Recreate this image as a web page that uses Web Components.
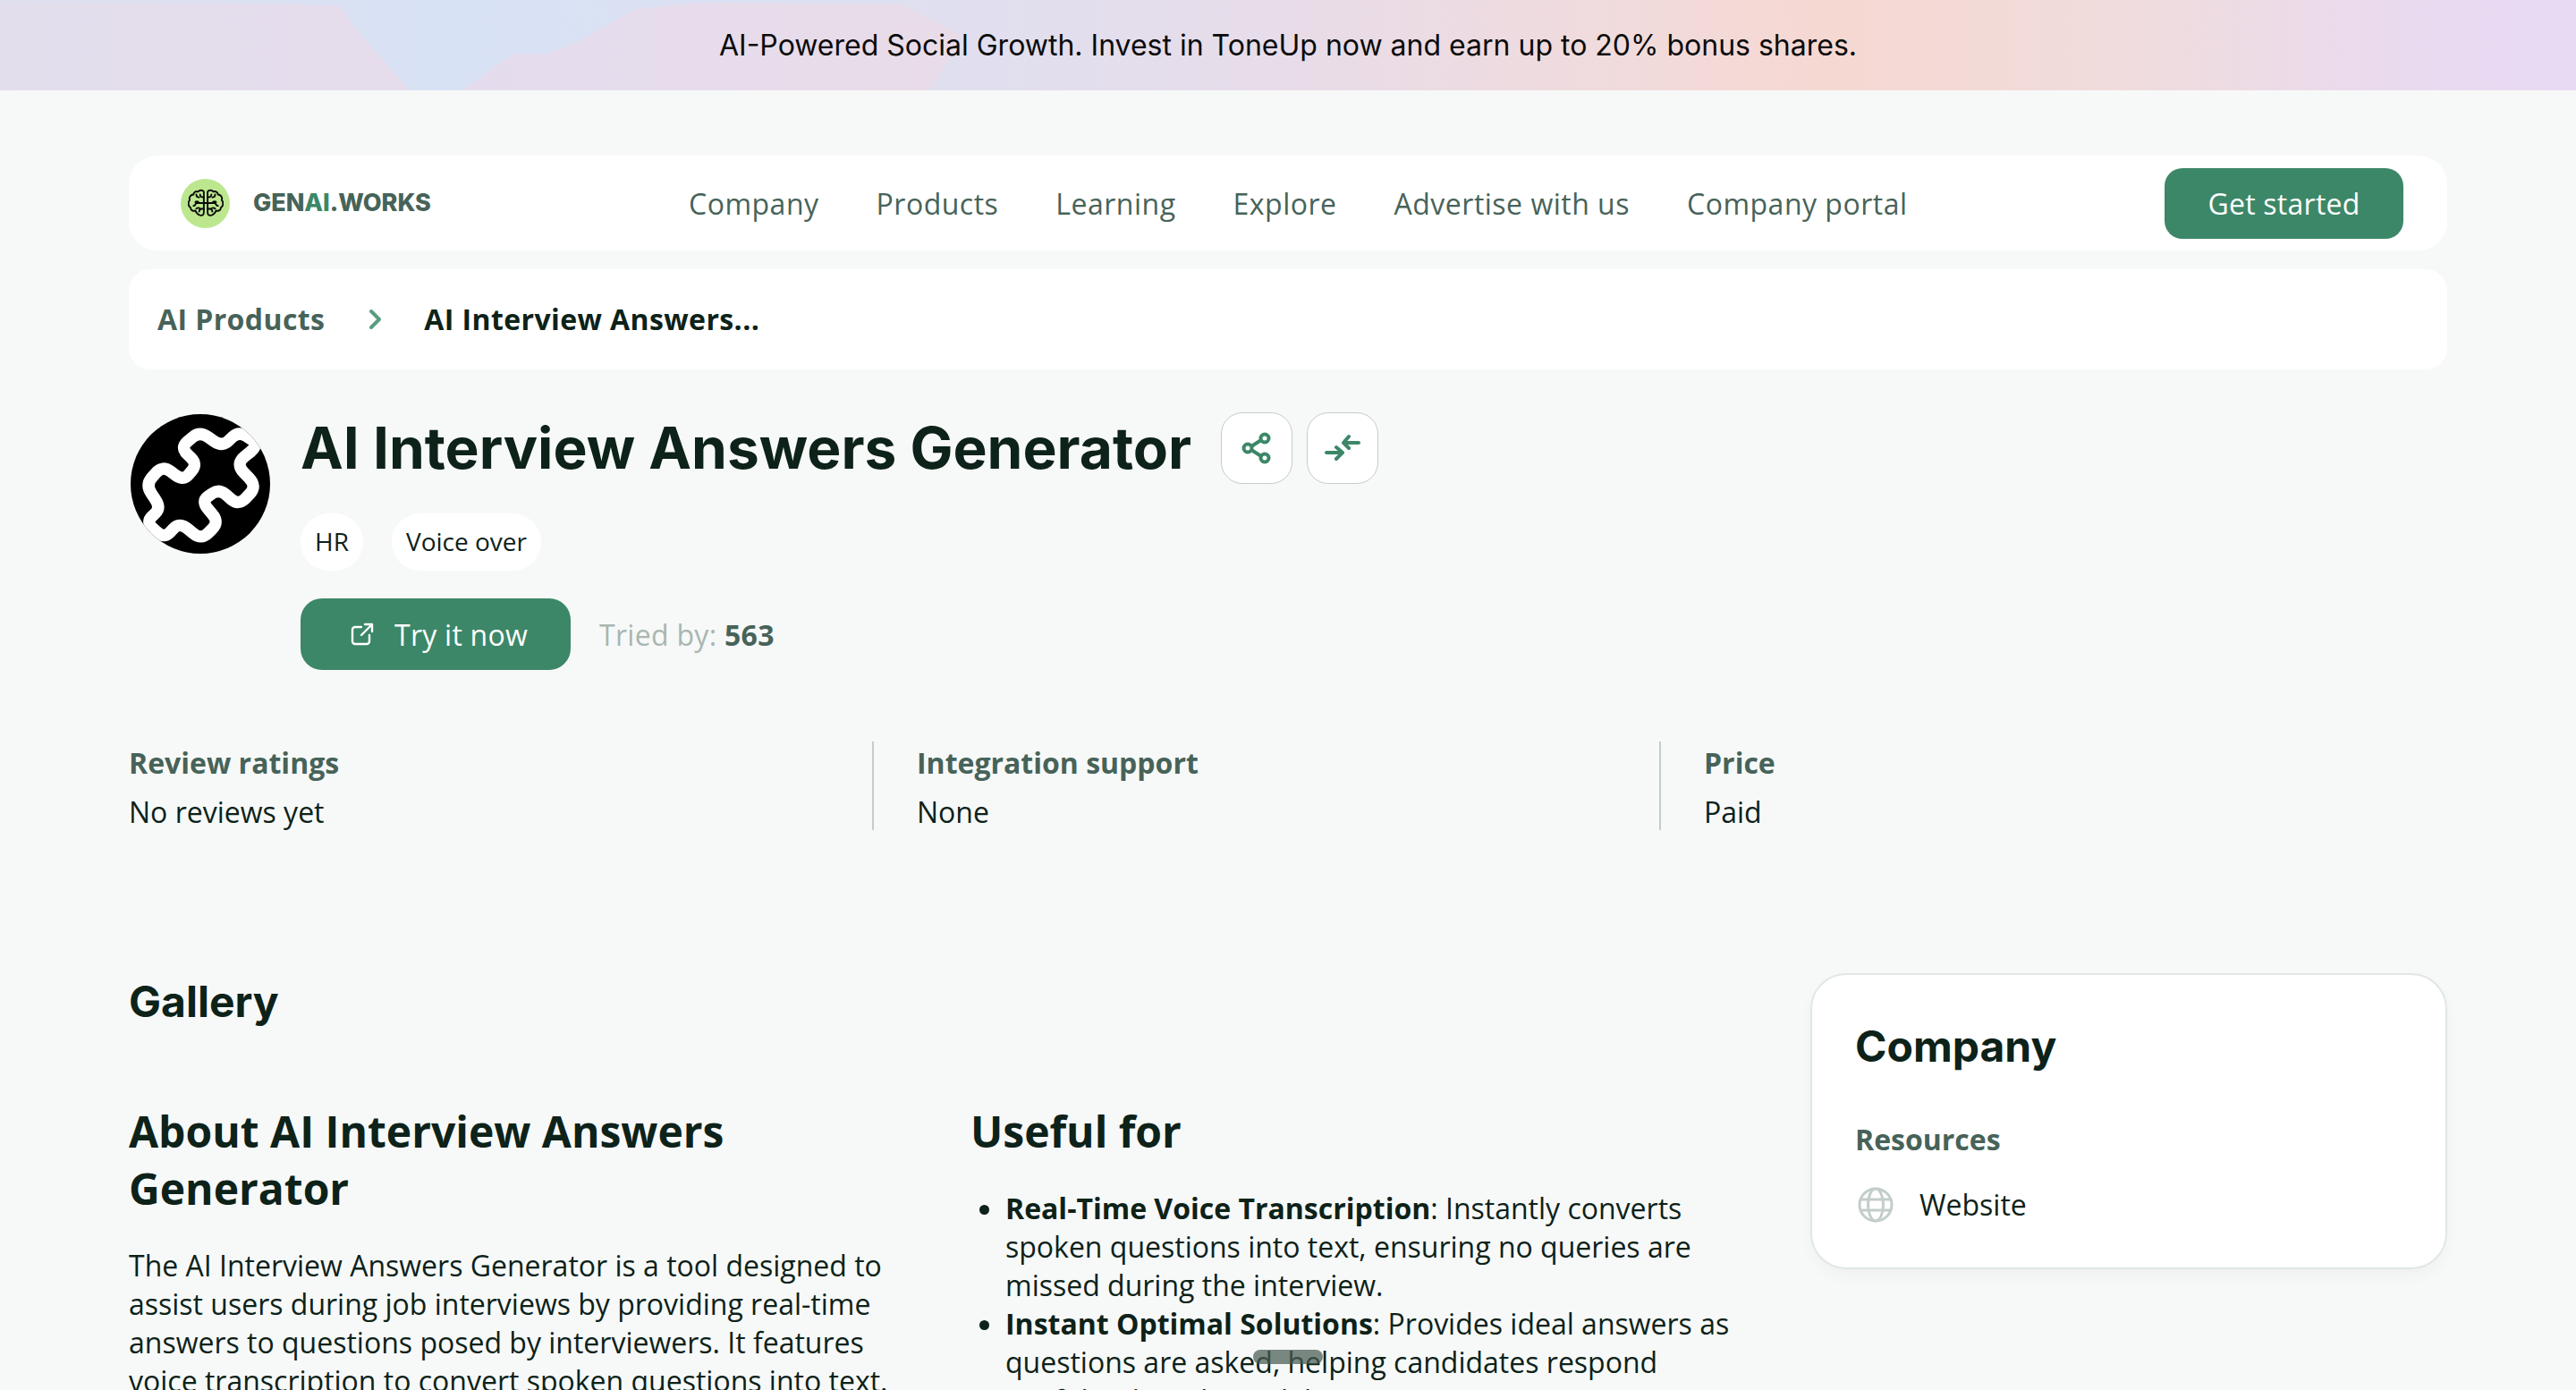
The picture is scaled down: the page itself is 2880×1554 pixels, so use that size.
<!DOCTYPE html>
<html>
<head>
<meta charset="utf-8">
<title>AI Interview Answers Generator</title>
<style>
    html, body { margin: 0; padding: 0; height: 1554px; overflow: hidden; background: #f7f9f8; }
    body { font-family: "Open Sans", sans-serif; color: #0d2219; }
    .wrap { display: block; padding: 0 144px; }
</style>
</head>
<body>
<promo-banner>AI-Powered Social Growth. Invest in ToneUp now and earn up to 20% bonus shares.</promo-banner>
<div class="wrap">
    <site-nav></site-nav>
    <bread-crumb></bread-crumb>
    <product-head></product-head>
    <product-stats></product-stats>
    <product-body></product-body>
</div>
<script>
class PromoBanner extends HTMLElement {
    connectedCallback() {
        this.attachShadow({ mode: 'open' });
        this.shadowRoot.innerHTML = `
            <style>
                :host {
                    display: flex;
                    align-items: center;
                    justify-content: center;
                    position: relative;
                    height: 101px;
                    overflow: hidden;
                    background: linear-gradient(90deg, #dfe0ee 0%, #d8e2f5 17%, #dce1f3 30%, #e8dce9 50%, #f0dbdd 62%, #f6d8d2 71%, #f0dcdc 82%, #e9daf2 95%, #e8daf3 100%);
                    font: 400 32px/40px Inter, sans-serif;
                    color: #0b0b0b;
                }
                svg { position: absolute; left: 0; top: 0; }
                span { position: relative; }
            </style>
            <svg width="1500" height="101" viewBox="0 0 1500 101">
                <defs>
                    <linearGradient id="a" x1="0" x2="1" y1="0" y2="0"><stop offset="0" stop-color="#e2deec"/><stop offset="1" stop-color="#e6dcec"/></linearGradient>
                    <linearGradient id="b" x1="0" x2="1" y1="0" y2="0"><stop offset="0" stop-color="#e4dcee"/><stop offset="1" stop-color="#e9dce8"/></linearGradient>
                </defs>
                <path d="M0 4 H260 L375 6 Q385 8 392 25 L458 101 H0Z" fill="url(#a)"/>
                <path d="M516 101 L575 60 H610 L650 45 L710 10 L780 3 L1010 5 L1075 40 L1040 101Z" fill="url(#b)"/>
            </svg>
            <span><slot></slot></span>
        `;
    }
}
customElements.define('promo-banner', PromoBanner);

class SiteNav extends HTMLElement {
    connectedCallback() {
        this.attachShadow({ mode: 'open' });
        const links = ['Company', 'Products', 'Learning', 'Explore', 'Advertise with us', 'Company portal'];
        const lobe = `
            <path d="M17 3c-1-2-5-2-6 0-3-1-5 1-5 3-3 0-5 3-4 6-2 2-2 6 1 8 0 3 3 4 5 3 1 3 4 6 7 5 2 0 2-2 2-4z"/>
            <path d="M17 15H9M12 15c-1-2-3-2-4-1M17 9c-2 0-4-1-4-3M9 6c0 2 1 3 3 3M17 21c-2 0-5 0-5 3M9 15c-1 2-2 3-3 3M13 21c-1-1-3-1-4 0"/>`;
        this.shadowRoot.innerHTML = `
            <style>
                :host {
                    display: flex;
                    align-items: center;
                    height: 106px;
                    margin-top: 73px;
                    padding: 0 49px 0 58px;
                    background: #fff;
                    border-radius: 32px;
                    font-family: "Open Sans", sans-serif;
                }
                .logo { display: flex; align-items: center; gap: 26px; width: 568px; }
                .mark {
                    width: 55px;
                    height: 55px;
                    border-radius: 50%;
                    background: #bce78f;
                    display: flex;
                    align-items: center;
                    justify-content: center;
                }
                .name { font: 800 27px/32px Inter, sans-serif; color: #476359; letter-spacing: -0.05px; }
                .name b { color: #3c8768; font-weight: 800; }
                nav { display: flex; gap: 64px; flex: 1; padding-top: 1px; }
                nav a { font-size: 32px; line-height: 44px; color: #476359; letter-spacing: 0.5px; }
                .cta {
                    display: flex;
                    align-items: center;
                    justify-content: center;
                    width: 267px;
                    height: 79px;
                    border-radius: 20px;
                    background: #3c8768;
                    color: #fff;
                    font-size: 32px;
                    letter-spacing: 0.25px;
                }
            </style>
            <div class="logo">
                <div class="mark">
                    <svg width="40" height="33" viewBox="0 0 38 31" fill="none" stroke="#0b0b0b" stroke-width="1.8" stroke-linejoin="round" stroke-linecap="round">
                        <g>${lobe}</g>
                        <g transform="matrix(-1 0 0 1 38 0)">${lobe}</g>
                        <path d="M17 15h4"/>
                    </svg>
                </div>
                <div class="name">GEN<b>AI</b>.WORKS</div>
            </div>
            <nav>${links.map(l => `<a>${l}</a>`).join('')}</nav>
            <div class="cta">Get started</div>
        `;
    }
}
customElements.define('site-nav', SiteNav);

class BreadCrumb extends HTMLElement {
    connectedCallback() {
        this.attachShadow({ mode: 'open' });
        this.shadowRoot.innerHTML = `
            <style>
                :host {
                    display: flex;
                    align-items: center;
                    height: 112px;
                    margin-top: 21px;
                    padding: 0 32px;
                    background: #fff;
                    border-radius: 24px;
                    font: 700 32px/44px "Open Sans", sans-serif;
                    letter-spacing: 0.4px;
                }
                .parent { color: #476359; }
                svg { margin: 0 46px 0 49px; }
                .current { color: #0d2219; }
            </style>
            <span class="parent">AI Products</span>
            <svg width="16" height="24" viewBox="0 0 16 24" fill="none" stroke="#5a9c80" stroke-width="4" stroke-linecap="round" stroke-linejoin="round"><path d="M3 3l9 9-9 9"/></svg>
            <span class="current">AI Interview Answers...</span>
        `;
    }
}
customElements.define('bread-crumb', BreadCrumb);

// rounds the corners of the outline so it reads as one soft band
function softPath(pts, r) {
    let d = '';
    pts.forEach((p, i) => {
        const a = pts[(i + pts.length - 1) % pts.length];
        const b = pts[(i + 1) % pts.length];
        const from = [p[0] + (a[0] - p[0]) * r, p[1] + (a[1] - p[1]) * r];
        const to = [p[0] + (b[0] - p[0]) * r, p[1] + (b[1] - p[1]) * r];
        d += `${i ? 'L' : 'M'}${from[0]} ${from[1]}Q${p[0]} ${p[1]} ${to[0]} ${to[1]}`;
    });
    return d + 'Z';
}

class ProductHead extends HTMLElement {
    connectedCallback() {
        this.attachShadow({ mode: 'open' });
        const band = softPath([
            [480, 170], [400, 235], [472, 310], [410, 375], [345, 318], [285, 360], [345, 430],
            [285, 490], [213, 430], [160, 485], [100, 430], [150, 382], [98, 305], [155, 240],
            [225, 292], [272, 235], [215, 180], [280, 125], [355, 178], [410, 125]
        ], 0.38);
        this.shadowRoot.innerHTML = `
            <style>
                :host {
                    display: grid;
                    grid-template-columns: 160px 1fr;
                    column-gap: 32px;
                    margin-top: 48px;
                    font-family: "Open Sans", sans-serif;
                }
                .avatar { display: block; width: 160px; height: 160px; }
                .title { display: flex; align-items: center; gap: 16px; height: 80px; }
                h1 { margin: 0 17px 0 0; font: 700 64px/80px Inter, sans-serif; color: #0d2219; }
                .icon-btn {
                    display: flex;
                    align-items: center;
                    justify-content: center;
                    width: 78px;
                    height: 78px;
                    background: #fff;
                    border: 1px solid #c3cdc9;
                    border-radius: 24px;
                }
                .tags { display: flex; gap: 32px; margin-top: 33px; }
                .tag {
                    height: 64px;
                    padding: 0 16px;
                    border-radius: 32px;
                    background: #fff;
                    font-size: 28px;
                    line-height: 62px;
                    color: #0d2219;
                }
                .actions { display: flex; align-items: center; gap: 32px; margin-top: 31px; }
                .try {
                    display: flex;
                    align-items: center;
                    gap: 23px;
                    box-sizing: border-box;
                    width: 302px;
                    height: 80px;
                    padding-left: 56px;
                    border-radius: 24px;
                    background: #3c8768;
                    color: #fff;
                    font-size: 32px;
                    letter-spacing: 0.25px;
                }
                .tried { font-size: 32px; color: #a9b6b1; letter-spacing: 0.3px; }
                .tried b { color: #476359; font-weight: 700; }
            </style>
            <svg class="avatar" viewBox="42 62 480 480">
                <defs><clipPath id="disc"><circle cx="282" cy="302" r="234"/></clipPath></defs>
                <circle cx="282" cy="302" r="234" fill="#000"/>
                <path d="${band}" fill="none" stroke="#fff" stroke-width="40" stroke-linejoin="round" clip-path="url(#disc)"/>
            </svg>
            <div>
                <div class="title">
                    <h1>AI Interview Answers Generator</h1>
                    <div class="icon-btn">
                        <svg width="36" height="38" viewBox="0 0 36 38" fill="none" stroke="#3c8768" stroke-width="4"><circle cx="27" cy="8" r="4.5"/><circle cx="8" cy="19" r="4.5"/><circle cx="27" cy="30" r="4.5"/><path d="M12 17l11-7M12 21l11 7"/></svg>
                    </div>
                    <div class="icon-btn">
                        <svg width="40" height="32" viewBox="0 0 40 32" fill="none" stroke="#3c8768" stroke-width="4" stroke-linecap="round" stroke-linejoin="round"><path d="M38 10H22M27 3l-6 7 6 6M2 21h17M13 15l7 6-7 7"/></svg>
                    </div>
                </div>
                <div class="tags"><div class="tag">HR</div><div class="tag">Voice over</div></div>
                <div class="actions">
                    <div class="try">
                        <svg width="26" height="26" viewBox="0 0 26 26" fill="none" stroke="#fff" stroke-width="2.4" stroke-linecap="round" stroke-linejoin="round"><path d="M12 5H5a3 3 0 0 0-3 3v13a3 3 0 0 0 3 3h13a3 3 0 0 0 3-3v-7M12 14L24 2M16 2h8v8"/></svg>
                        <span>Try it now</span>
                    </div>
                    <div class="tried">Tried by: <b>563</b></div>
                </div>
            </div>
        `;
    }
}
customElements.define('product-head', ProductHead);

class ProductStats extends HTMLElement {
    connectedCallback() {
        this.attachShadow({ mode: 'open' });
        const stats = [['Review ratings', 'No reviews yet'], ['Integration support', 'None'], ['Price', 'Paid']];
        this.shadowRoot.innerHTML = `
            <style>
                :host {
                    display: grid;
                    grid-template-columns: 831fr 880fr 881fr;
                    margin-top: 80px;
                    font-family: "Open Sans", sans-serif;
                }
                .stat { height: 99px; padding-left: 48px; border-left: 2px solid #c3cdc9; }
                .stat:first-of-type { padding-left: 0; border-left: 0; }
                .k { font-size: 32px; font-weight: 700; line-height: 48px; color: #476359; }
                .v { margin-top: 5px; font-size: 32px; line-height: 52px; color: #0d2219; }
            </style>
            ${stats.map(s => `<div class="stat"><div class="k">${s[0]}</div><div class="v">${s[1]}</div></div>`).join('')}
        `;
    }
}
customElements.define('product-stats', ProductStats);

class ProductBody extends HTMLElement {
    connectedCallback() {
        this.attachShadow({ mode: 'open' });
        this.shadowRoot.innerHTML = `
            <style>
                :host {
                    display: grid;
                    grid-template-columns: 1fr 712px;
                    column-gap: 72px;
                    position: relative;
                    margin-top: 160px;
                    font-family: "Open Sans", sans-serif;
                    color: #0d2219;
                }
                .gallery { margin: 0; font: 700 48px/64px Inter, sans-serif; }
                .cols { display: grid; grid-template-columns: 856px 864px; column-gap: 85px; margin-top: 81px; }
                h2 { margin: 0 0 32px; font: 700 48px/64px "Open Sans", sans-serif; }
                p, ul { margin: 0; font-size: 32px; line-height: 43px; }
                ul { padding-left: 39px; }
                aside {
                    align-self: start;
                    height: 331px;
                    box-sizing: border-box;
                    padding: 48px;
                    background: #fff;
                    border: 2px solid #e0e7e4;
                    border-radius: 40px;
                    box-shadow: 0 8px 16px rgba(13, 34, 25, 0.03);
                }
                aside h3 { margin: 0; font: 700 48px/64px Inter, sans-serif; }
                .res { margin-top: 50px; font-size: 32px; font-weight: 700; line-height: 44px; color: #476359; }
                .link { display: flex; align-items: center; gap: 29px; margin: 29px 0 0 3px; font-size: 32px; line-height: 44px; }
                .pill {
                    position: absolute;
                    left: 1257px;
                    top: 421px;
                    width: 78px;
                    height: 16px;
                    border-radius: 8px;
                    background: rgba(70, 90, 80, 0.72);
                }
            </style>
            <div>
                <h2 class="gallery">Gallery</h2>
                <div class="cols">
                    <section>
                        <h2>About AI Interview Answers Generator</h2>
                        <p>The AI Interview Answers Generator is a tool designed to assist users during job interviews by providing real-time answers to questions posed by interviewers. It features voice transcription to convert spoken questions into text.</p>
                    </section>
                    <section>
                        <h2>Useful for</h2>
                        <ul>
                            <li><b>Real-Time Voice Transcription</b>: Instantly converts spoken questions into text, ensuring no queries are missed during the interview.</li>
                            <li><b>Instant Optimal Solutions</b>: Provides ideal answers as questions are asked, helping candidates respond confidently without delay.</li>
                        </ul>
                    </section>
                </div>
            </div>
            <aside>
                <h3>Company</h3>
                <div class="res">Resources</div>
                <div class="link">
                    <svg width="40" height="40" viewBox="0 0 40 40" fill="none" stroke="#c3cdc9" stroke-width="3"><circle cx="20" cy="20" r="18"/><ellipse cx="20" cy="20" rx="8.5" ry="18"/><path d="M3.5 14h33M3.5 26h33"/></svg>
                    <span>Website</span>
                </div>
            </aside>
            <div class="pill"></div>
        `;
    }
}
customElements.define('product-body', ProductBody);
</script>
</body>
</html>
